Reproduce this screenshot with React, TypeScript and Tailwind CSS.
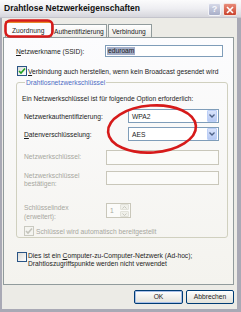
import React from "react";

function Check({ disabled = false, checked = false }: { disabled?: boolean; checked?: boolean }) {
  return (
    <span
      className={
        "flex items-center justify-center w-[10px] h-[10px] shrink-0 border " +
        (disabled ? "border-[#c9c9c0] bg-[#f4f4f0]" : "border-[#2a5586] bg-gradient-to-br from-[#dcdcd7] to-white")
      }
    >
      {checked && (
        <svg width="8" height="8" viewBox="0 0 8 8">
          <path d="M1 4 L3 6 L7 1.5" fill="none" stroke={disabled ? "#c4c4bc" : "#21a121"} strokeWidth="1.6" />
        </svg>
      )}
    </span>
  );
}

function Select({ value }: { value: string }) {
  return (
    <div className="flex items-center w-[91px] h-[14px] border border-[#7f9db9] bg-white">
      <span className="flex-1 pl-[3px] leading-[9px]">{value}</span>
      <span className="flex items-center justify-center w-[10px] h-[12px] mr-[1px] rounded-[1px] bg-gradient-to-b from-[#d9e3fb] to-[#b6c9f3] border border-[#bccff7]">
        <svg width="6" height="4" viewBox="0 0 6 4">
          <path d="M0.5 0.5 L3 3 L5.5 0.5" fill="none" stroke="#4d6185" strokeWidth="1.3" />
        </svg>
      </span>
    </div>
  );
}

export default function App() {
  return (
    <div className="relative w-[241px] h-[312px] overflow-hidden flex flex-col bg-[#a9a9b5] font-['Liberation_Sans',Arial,sans-serif] text-[6.7px] leading-[9px] text-[#1c1c1c]">
      {/* Title bar */}
      <div className="flex items-center h-[18px] pl-[4px] pr-[4px] bg-gradient-to-b from-[#fbfbfc] via-[#eeeef2] to-[#d6d6dc] border-b border-[#c4c4cc]">
        <span className="flex-1 font-bold text-[8.5px] text-[#111]">Drahtlose Netzwerkeigenschaften</span>
        <span className="flex items-center justify-center w-[13px] h-[13px] mt-[2px] mr-[2px] rounded-[2px] border border-[#f4f4f8] bg-gradient-to-b from-[#d6d9e8] to-[#a8aec8] text-[#f8f8fc] font-bold text-[9px] leading-none">
          ?
        </span>
        <span className="flex items-center justify-center w-[14px] h-[13px] mt-[2px] rounded-[2px] border border-[#f4e4e0] bg-gradient-to-b from-[#e88a78] to-[#c9412c]">
          <svg width="8" height="8" viewBox="0 0 8 8">
            <path d="M1 1 L7 7 M7 1 L1 7" stroke="white" strokeWidth="1.6" />
          </svg>
        </span>
      </div>

      {/* Body */}
      <div className="flex-1 flex flex-col ml-[2px] mr-[4px] mb-[3px] bg-[#ecebe6] pl-[1px] pr-[3px] pt-[3px]">
        {/* Tabs */}
        <div className="flex items-end h-[16px] pl-[2px] whitespace-nowrap">
          <div className="flex items-center h-[16px] w-[47px] pl-[6px] bg-[#fcfcfe] border border-b-0 border-[#919b9c] border-t-[#e68b2c] border-t-2">
            Zuordnung
          </div>
          <div className="flex items-center h-[13px] w-[55px] pl-[2px] bg-gradient-to-b from-white to-[#ecebe6] border border-b-0 border-l-0 border-[#919b9c]">
            Authentifizierung
          </div>
          <div className="flex items-center h-[13px] w-[44px] ml-[1px] pl-[3px] bg-gradient-to-b from-white to-[#ecebe6] border border-b-0 border-[#919b9c]">
            Verbindung
          </div>
        </div>

        {/* Panel */}
        <div className="flex flex-col h-[248px] border border-[#919b9c] bg-gradient-to-b from-[#fcfcfe] to-[#f4f3ee] pl-[12px] pr-[10px] pt-[7px] whitespace-nowrap">
          {/* SSID */}
          <div className="flex items-center h-[12px]">
            <span className="w-[89px]">
              <span className="underline">N</span>etzwerkname (SSID):
            </span>
            <div className="flex items-center flex-1 h-[12px] border border-[#7f9db9] bg-white pl-[1px]">
              <span className="px-[1px] bg-[#a3aec8] leading-[8px]">eduroam</span>
            </div>
          </div>

          {/* Checkbox */}
          <div className="flex items-center mt-[9px] ml-[1px] gap-[1px]">
            <Check checked />
            <span>
              <span className="underline">V</span>erbindung auch herstellen, wenn kein Broadcast gesendet wird
            </span>
          </div>

          {/* Groupbox */}
          <fieldset className="mt-[2px] h-[160px] border border-[#d0d0bf] rounded-[3px] pl-[5px] pr-[8px]">
            <legend className="ml-[3px] px-[1px] text-[#4e6cc4]">Drahtlosnetzwerkschlüssel</legend>
            <div className="mt-[7px]">Ein Netzwerkschlüssel ist für folgende Option erforderlich:</div>

            <div className="flex items-center justify-between mt-[6px] pl-[2px]">
              <span>Netzwerkauthentifizierung:</span>
              <Select value="WPA2" />
            </div>
            <div className="flex items-center justify-between mt-[4px] pl-[2px]">
              <span>
                <span className="underline">D</span>atenverschlüsselung:
              </span>
              <Select value="AES" />
            </div>

            <div className="flex items-start mt-[9px] pl-[2px] text-[#a7a7a0]">
              <span className="w-[82px] pt-[2px]">Netzwerkschlüssel:</span>
              <div className="w-[113px] h-[15px] border border-[#c9c7ba] bg-[#fbfbf9]" />
            </div>
            <div className="flex items-start mt-[6px] pl-[2px] text-[#a7a7a0]">
              <span className="w-[82px] pt-[1px] leading-[8px]">
                Netzwerkschlüssel
                <br />
                bestätigen:
              </span>
              <div className="w-[113px] h-[14px] border border-[#c9c7ba] bg-[#fbfbf9]" />
            </div>
            <div className="flex items-start mt-[15px] pl-[2px] text-[#a7a7a0]">
              <span className="w-[82px] leading-[9px]">
                Schlüsselindex
                <br />
                (erweitert):
              </span>
              <div className="flex items-center w-[25px] h-[15px] border border-[#c9c7ba] bg-[#fbfbf9]">
                <span className="flex-1 pl-[3px]">1</span>
                <span className="flex flex-col w-[9px] h-[13px] mr-[1px] gap-[1px]">
                  <span className="flex-1 flex items-center justify-center rounded-[1px] bg-[#f0f0ea] border border-[#e2e2da]">
                    <svg width="5" height="3" viewBox="0 0 5 3"><path d="M0.5 2.5 L2.5 0.5 L4.5 2.5" fill="none" stroke="#c9c9c0" strokeWidth="1" /></svg>
                  </span>
                  <span className="flex-1 flex items-center justify-center rounded-[1px] bg-[#f0f0ea] border border-[#e2e2da]">
                    <svg width="5" height="3" viewBox="0 0 5 3"><path d="M0.5 0.5 L2.5 2.5 L4.5 0.5" fill="none" stroke="#c9c9c0" strokeWidth="1" /></svg>
                  </span>
                </span>
              </div>
            </div>
            <div className="flex items-center mt-[5px] pl-[2px] gap-[2px] text-[#a7a7a0]">
              <Check checked disabled />
              <span>Schlüssel wird automatisch bereitgestellt</span>
            </div>
          </fieldset>

          {/* Ad-hoc */}
          <div className="flex items-start mt-[14px] ml-[1px] gap-[1px]">
            <Check />
            <span className="leading-[8px]">
              Dies ist ein <span className="underline">C</span>omputer-zu-Computer-Netzwerk (Ad-hoc);
              <br />
              Drahtloszugriffspunkte werden nicht verwendet
            </span>
          </div>
        </div>

        {/* Buttons */}
        <div className="flex justify-end gap-[3px] mt-[5px]">
          <button className="w-[49px] h-[14px] rounded-[2px] border border-[#003c74] bg-gradient-to-b from-white to-[#e3e2da] shadow-[inset_0_0_0_1px_#a8bfe8] text-[6.7px] leading-none">
            OK
          </button>
          <button className="w-[48px] h-[14px] rounded-[2px] border border-[#003c74] bg-gradient-to-b from-white to-[#e3e2da] text-[6.7px] leading-none">
            Abbrechen
          </button>
        </div>
      </div>

      {/* Red annotations */}
      <svg className="absolute left-0 top-0 pointer-events-none" width="241" height="312" viewBox="0 0 241 312">
        <rect x="5.5" y="20.5" width="47" height="16" rx="5" fill="none" stroke="#d61a1a" strokeWidth="2.6" />
        <ellipse cx="152" cy="129" rx="44" ry="23.5" transform="rotate(-4 152 129)" fill="none" stroke="#d61a1a" strokeWidth="2.6" />
      </svg>
    </div>
  );
}
